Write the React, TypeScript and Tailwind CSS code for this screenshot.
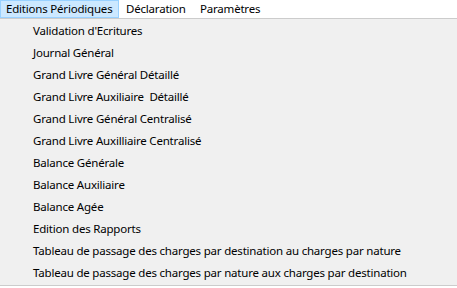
import React from "react";

const items = [
  "Validation d'Ecritures",
  "Journal Général",
  "Grand Livre Général Détaillé",
  "Grand Livre Auxiliaire  Détaillé",
  "Grand Livre Général Centralisé",
  "Grand Livre Auxilliaire Centralisé",
  "Balance Générale",
  "Balance Auxiliaire",
  "Balance Agée",
  "Edition des Rapports",
  "Tableau de passage des charges par destination au charges par nature",
  "Tableau de passage des charges par nature aux charges par destination",
];

export default function App() {
  return (
    <div
      className="w-[457px] h-[288px] bg-white text-[11.5px] tracking-[-0.2px] text-black overflow-hidden"
      style={{ fontFamily: '"Noto Sans", "Open Sans", sans-serif' }}
    >
      <div className="flex h-[18px] bg-white whitespace-nowrap">
        <div className="pl-[5px] h-[18px] flex items-center bg-[#cce8ff] border border-[#99d1ff] w-[119px]">
          Editions Périodiques
        </div>
        <div className="pl-[7px] h-[18px] flex items-center w-[74px]">Déclaration</div>
        <div className="pl-[7px] h-[18px] flex items-center">Paramètres</div>
      </div>
      <div className="border-t border-[#cccccc] bg-[#f0f0f0] border-b h-[268px] pt-[1px]">
        {items.map((t) => (
          <div key={t} className="h-[22px] flex items-center pl-[33px] whitespace-pre">
            {t}
          </div>
        ))}
      </div>
    </div>
  );
}
